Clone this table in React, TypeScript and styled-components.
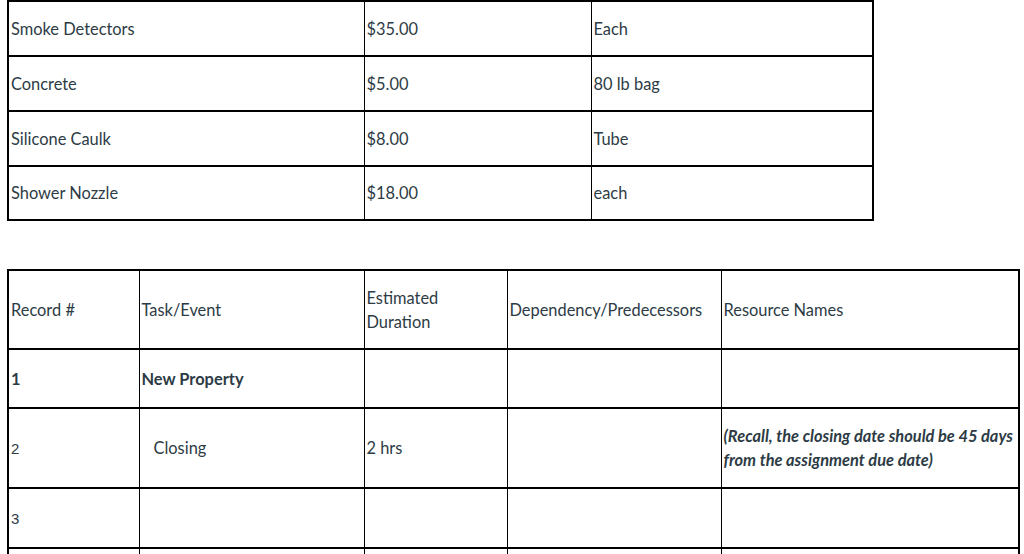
import React from "react";
import styled, { createGlobalStyle } from "styled-components";

const GlobalStyle = createGlobalStyle`
  body {
    margin: 0;
    background: #fff;
    font-family: Lato, "Liberation Sans", sans-serif;
    color: #2d3b45;
  }
`;

const Page = styled.div`
  padding: 0 0 0 7px;
  display: flex;
  flex-direction: column;
  gap: 48px;
`;

const Table = styled.table<{ $width: number }>`
  width: ${(p) => p.$width}px;
  border-collapse: collapse;
  table-layout: fixed;
  border: 2px solid #000;
  font-size: 16.4px;
  line-height: 24px;
`;

const Row = styled.tr<{ $height: number }>`
  height: ${(p) => p.$height}px;
`;

const Cell = styled.td<{ $indent?: boolean }>`
  border-top: 2px solid #000;
  border-bottom: 2px solid #000;
  border-left: 1px solid #000;
  border-right: 1px solid #000;
  padding: 0 2px 0 ${(p) => (p.$indent ? "14px" : "2px")};
  vertical-align: middle;
  text-align: left;
  font-weight: 400;
`;

const Strong = styled.strong`
  font-weight: 700;
`;

const Plain = styled.span`
  font-family: "Liberation Sans", Arial, sans-serif;
  font-size: 15px;
`;

const Note = styled.em`
  font-weight: 700;
  font-style: italic;
  font-size: 16.4px;
`;

type Material = { name: string; price: string; unit: string };

const materials: Material[] = [
  { name: "Smoke Detectors", price: "$35.00", unit: "Each" },
  { name: "Concrete", price: "$5.00", unit: "80 lb bag" },
  { name: "Silicone Caulk", price: "$8.00", unit: "Tube" },
  { name: "Shower Nozzle", price: "$18.00", unit: "each" },
];

const App: React.FC = () => {
  return (
    <Page>
      <GlobalStyle />
      <Table $width={865}>
        <colgroup>
          <col style={{ width: 356 }} />
          <col style={{ width: 227 }} />
          <col style={{ width: 282 }} />
        </colgroup>
        <tbody>
          {materials.map((m, i) => (
            <Row key={m.name} $height={i === 3 ? 54 : 55}>
              <Cell>{m.name}</Cell>
              <Cell>{m.price}</Cell>
              <Cell>{m.unit}</Cell>
            </Row>
          ))}
        </tbody>
      </Table>

      <Table $width={1011}>
        <colgroup>
          <col style={{ width: 131 }} />
          <col style={{ width: 225 }} />
          <col style={{ width: 143 }} />
          <col style={{ width: 214 }} />
          <col style={{ width: 298 }} />
        </colgroup>
        <tbody>
          <Row $height={79}>
            <Cell>Record #</Cell>
            <Cell>Task/Event</Cell>
            <Cell>
              Estimated
              <br />
              Duration
            </Cell>
            <Cell>Dependency/Predecessors</Cell>
            <Cell>Resource Names</Cell>
          </Row>
          <Row $height={59}>
            <Cell>
              <Strong>1</Strong>
            </Cell>
            <Cell>
              <Strong>New Property</Strong>
            </Cell>
            <Cell />
            <Cell />
            <Cell />
          </Row>
          <Row $height={80}>
            <Cell>
              <Plain>2</Plain>
            </Cell>
            <Cell $indent>Closing</Cell>
            <Cell>2 hrs</Cell>
            <Cell />
            <Cell>
              <Note>
                (Recall, the closing date should be 45 days from the assignment
                due date)
              </Note>
            </Cell>
          </Row>
          <Row $height={60}>
            <Cell>
              <Plain>3</Plain>
            </Cell>
            <Cell />
            <Cell />
            <Cell />
            <Cell />
          </Row>
          <Row $height={60}>
            <Cell />
            <Cell />
            <Cell />
            <Cell />
            <Cell />
          </Row>
        </tbody>
      </Table>
    </Page>
  );
};

export default App;
